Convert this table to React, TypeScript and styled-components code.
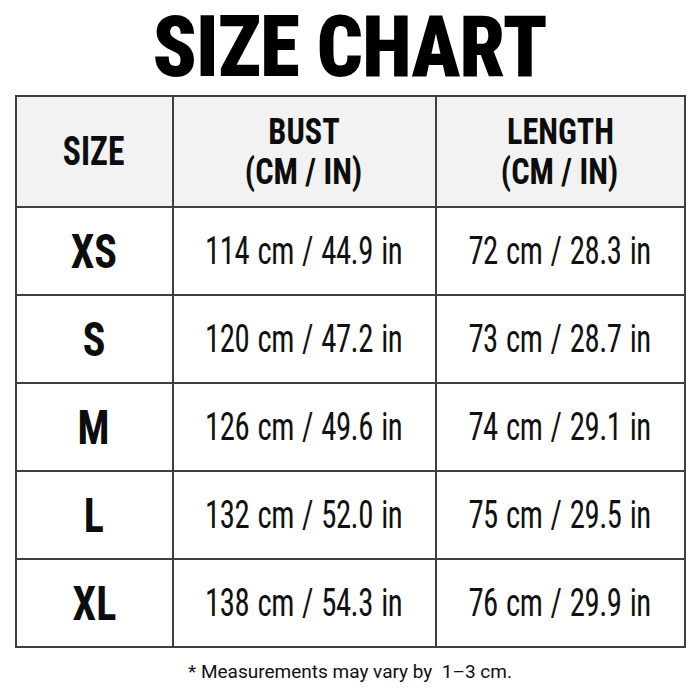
import React from "react";
import styled, { createGlobalStyle } from "styled-components";

const GlobalStyle = createGlobalStyle`
  html, body { margin: 0; padding: 0; background: #ffffff; }
  body { font-family: "Roboto Condensed", "Liberation Sans Narrow", sans-serif; color: #111; }
`;

const Page = styled.div`
  width: 700px;
  height: 700px;
  display: flex;
  flex-direction: column;
  align-items: center;
  box-sizing: border-box;
  padding-top: 5px;
`;

const Title = styled.h1`
  margin: 0;
  padding: 0 8px;
  font-family: "Roboto Condensed", sans-serif;
  font-weight: 900;
  font-size: 85px;
  line-height: 85px;
  letter-spacing: -0.8px;
  color: #000;
`;

const Table = styled.div`
  margin-top: 5px;
  display: grid;
  grid-template-columns: 155px 261px 247px;
  grid-template-rows: 109px repeat(5, 86px);
  gap: 2px;
  padding: 2px;
  background: #3f3f3f;
`;

const Cell = styled.div<{ $head?: boolean }>`
  background: ${(p) => (p.$head ? "#f2f2f2" : "#ffffff")};
  display: flex;
  align-items: center;
  justify-content: center;
  text-align: center;
`;

const Narrow = styled.span<{ $scale: number }>`
  display: inline-block;
  white-space: nowrap;
  transform: scaleX(${(p) => p.$scale});
  transform-origin: center;
`;

const HeadText = styled.div<{ $big?: boolean }>`
  font-weight: 700;
  font-size: ${(p) => (p.$big ? 40 : 37)}px;
  line-height: 40px;
  color: #0d0d0d;
`;

const SizeText = styled.div`
  font-weight: 700;
  font-size: 49px;
  line-height: 1;
  color: #0d0d0d;
`;

const ValueText = styled.div`
  font-weight: 400;
  font-size: 38px;
  line-height: 1;
  letter-spacing: -0.6px;
  word-spacing: 2px;
  color: #111;
`;

const Note = styled.p`
  margin: 14px 0 0;
  font-family: Roboto, "Liberation Sans", sans-serif;
  font-size: 19px;
  line-height: 19px;
  font-weight: 400;
  color: #111;
`;

const rows = [
  ["XS", "114 cm / 44.9 in", "72 cm / 28.3 in"],
  ["S", "120 cm / 47.2 in", "73 cm / 28.7 in"],
  ["M", "126 cm / 49.6 in", "74 cm / 29.1 in"],
  ["L", "132 cm / 52.0 in", "75 cm / 29.5 in"],
  ["XL", "138 cm / 54.3 in", "76 cm / 29.9 in"],
];

export default function App() {
  return (
    <>
      <GlobalStyle />
      <Page>
        <Title>
          <Narrow $scale={0.95}>SIZE CHART</Narrow>
        </Title>
        <Table>
          <Cell $head>
            <HeadText $big>
              <Narrow $scale={0.84}>SIZE</Narrow>
            </HeadText>
          </Cell>
          <Cell $head>
            <HeadText>
              <Narrow $scale={0.87}>BUST</Narrow>
              <br />
              <Narrow $scale={0.87}>(CM / IN)</Narrow>
            </HeadText>
          </Cell>
          <Cell $head>
            <HeadText>
              <Narrow $scale={0.87}>LENGTH</Narrow>
              <br />
              <Narrow $scale={0.87}>(CM / IN)</Narrow>
            </HeadText>
          </Cell>
          {rows.map(([s, b, l]) => (
            <React.Fragment key={s}>
              <Cell>
                <SizeText>
                  <Narrow $scale={0.86}>{s}</Narrow>
                </SizeText>
              </Cell>
              <Cell>
                <ValueText>
                  <Narrow $scale={0.81}>{b}</Narrow>
                </ValueText>
              </Cell>
              <Cell>
                <ValueText>
                  <Narrow $scale={0.81}>{l}</Narrow>
                </ValueText>
              </Cell>
            </React.Fragment>
          ))}
        </Table>
        <Note>* Measurements may vary by&nbsp; 1–3 cm.</Note>
      </Page>
    </>
  );
}
